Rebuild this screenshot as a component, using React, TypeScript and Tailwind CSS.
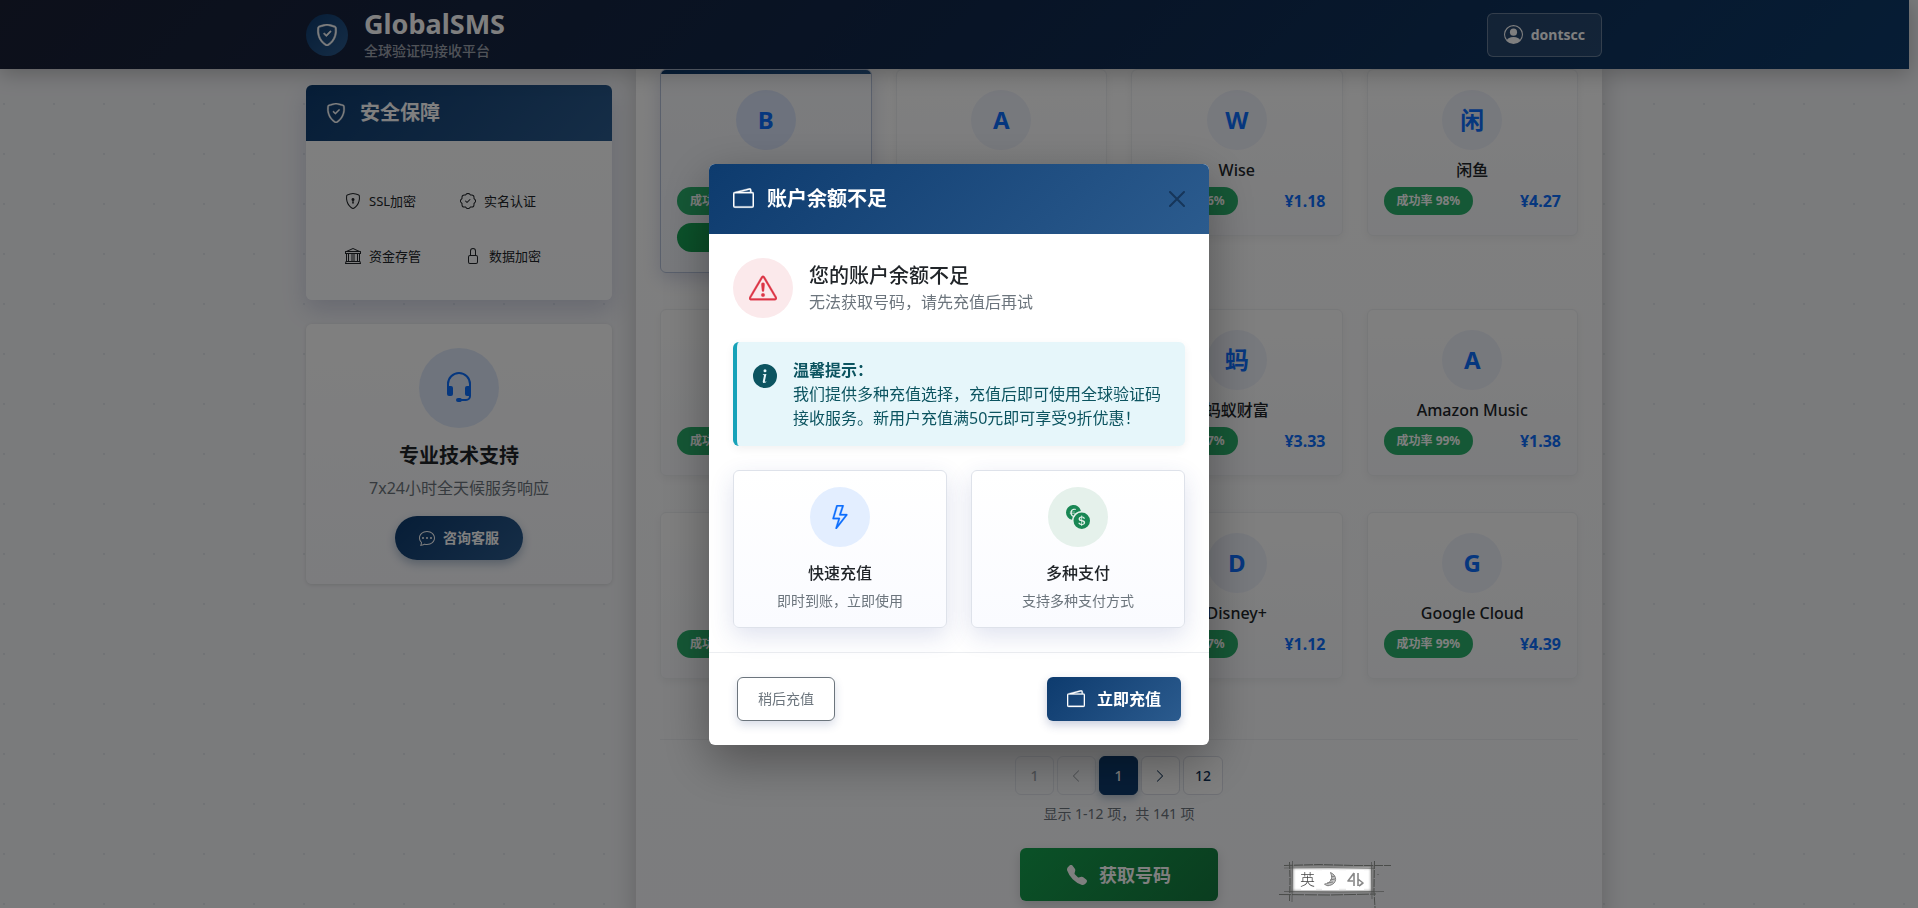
import type { ReactNode } from "react";
import {
  BsBank,
  BsChatDots,
  BsChevronLeft,
  BsChevronRight,
  BsCurrencyExchange,
  BsExclamationTriangle,
  BsHeadset,
  BsInfoCircleFill,
  BsLightning,
  BsLock,
  BsPatchCheck,
  BsPersonCircle,
  BsShieldCheck,
  BsShieldLock,
  BsTelephoneFill,
  BsWallet2,
} from "react-icons/bs";

interface Service {
  initial: string;
  name: string;
  rate: number;
  price: string;
  selected?: boolean;
}

const services: Service[] = [
  { initial: "B", name: "Bumble", rate: 98, price: "1.25", selected: true },
  { initial: "A", name: "Apple", rate: 97, price: "2.10" },
  { initial: "W", name: "Wise", rate: 96, price: "1.18" },
  { initial: "闲", name: "闲鱼", rate: 98, price: "4.27" },
  { initial: "T", name: "Telegram", rate: 98, price: "3.60" },
  { initial: "N", name: "Netflix", rate: 97, price: "1.45" },
  { initial: "蚂", name: "蚂蚁财富", rate: 97, price: "3.33" },
  { initial: "A", name: "Amazon Music", rate: 99, price: "1.38" },
  { initial: "L", name: "LINE", rate: 98, price: "2.80" },
  { initial: "S", name: "Steam", rate: 96, price: "1.62" },
  { initial: "D", name: "Disney+", rate: 97, price: "1.12" },
  { initial: "G", name: "Google Cloud", rate: 99, price: "4.39" },
];

const guarantees = [
  { icon: BsShieldLock, label: "SSL加密" },
  { icon: BsPatchCheck, label: "实名认证" },
  { icon: BsBank, label: "资金存管" },
  { icon: BsLock, label: "数据加密" },
];

function Header() {
  return (
    <header className="relative z-10 mr-[9px] pr-px bg-linear-135 from-[#1a2035] via-[#10284c] to-[#0c3a6a] shadow-[0_4px_20px_rgba(0,0,0,0.25)]">
      <div className="max-w-[1320px] mx-auto px-3 h-[69px] flex items-center justify-between">
        <a href="#" className="flex items-center gap-4">
          <span className="w-[42px] h-[42px] rounded-full bg-linear-135 from-[#0d3b6e] to-[#2b5b8e] flex items-center justify-center text-white">
            <BsShieldCheck size={22} strokeWidth={0.4} />
          </span>
          <span className="flex flex-col">
            <span className="text-[27px] leading-8 font-bold text-white">
              GlobalSMS
            </span>
            <span className="text-sm leading-[22px] font-medium text-white/60">
              全球验证码接收平台
            </span>
          </span>
        </a>

        <button className="h-11 px-4 flex items-center gap-2 rounded-md border border-white/30 bg-white/10 text-white text-sm font-bold">
          <BsPersonCircle size={19} />
          dontscc
        </button>
      </div>
    </header>
  );
}

function SecurityCard() {
  return (
    <section className="rounded-md overflow-hidden bg-linear-to-b from-white to-[#fbfcff] shadow-[0_10px_24px_rgba(40,50,120,0.18)]">
      <h2 className="h-14 px-5 flex items-center gap-[14px] bg-linear-135 from-[#0d3b6e] to-[#2b5b8e] text-white text-xl font-bold">
        <BsShieldCheck size={20} strokeWidth={0.3} />
        安全保障
      </h2>
      <ul className="flex flex-wrap gap-x-11 gap-y-[35px] pl-[39px] pr-8 pt-[50px] pb-[34px] text-[13px] leading-5 text-[#212529]">
        {guarantees.map(({ icon: Icon, label }) => (
          <li key={label} className="flex items-center gap-2">
            <Icon size={16} />
            {label}
          </li>
        ))}
      </ul>
    </section>
  );
}

function SupportCard() {
  return (
    <section className="rounded-md p-6 flex flex-col items-center bg-linear-to-b from-white to-[#f8f9fd] shadow-[0_1px_4px_rgba(0,0,0,0.12)]">
      <div className="w-20 h-20 rounded-full bg-[#dfe9fb] flex items-center justify-center text-[#0d6efd]">
        <BsHeadset size={32} />
      </div>
      <h2 className="mt-4 text-xl leading-6 font-bold text-[#212529]">
        专业技术支持
      </h2>
      <p className="mt-2 leading-6 text-[#6c757d]">7x24小时全天候服务响应</p>
      <button className="mt-4 h-11 px-6 flex items-center gap-2 rounded-full bg-linear-135 from-[#0d3b6e] to-[#2b5b8e] text-white text-sm font-bold shadow-[0_4px_10px_rgba(13,59,110,0.3)]">
        <BsChatDots size={16} />
        咨询客服
      </button>
    </section>
  );
}

function ServiceCard({ initial, name, rate, price, selected }: Service) {
  return (
    <div
      className={`relative overflow-hidden rounded-md border px-4 py-5 ${
        selected
          ? "border-[#b4c0d8] bg-linear-to-b from-[#f8f9fc] to-[#f0f3f9] shadow-[0_6px_18px_rgba(40,50,120,0.18)]"
          : "border-[#eef0f3] bg-linear-to-b from-white to-[#f8f9fc] shadow-[0_3px_8px_rgba(0,0,0,0.05)]"
      }`}
    >
      {selected && (
        <div className="absolute inset-x-0 top-0 h-1 bg-linear-to-r from-[#0d3b6e] to-[#2b5b8e]" />
      )}
      <div
        className={`w-[60px] h-[60px] mx-auto rounded-full flex items-center justify-center text-2xl font-bold text-[#0d6efd] ${
          selected ? "bg-[#dbe5fa]" : "bg-[#eff2fb]"
        }`}
      >
        {initial}
      </div>
      <p className="mt-2 mb-[5px] leading-6 text-center font-medium text-[#212529]">
        {name}
      </p>
      <div className="flex items-center justify-between">
        <span className="h-7 px-[13px] flex items-center rounded-full bg-[#2bb06c] text-xs font-bold text-white">
          成功率 {rate}%
        </span>
        <span className="font-bold text-[#0d6efd]">¥{price}</span>
      </div>
      {selected && (
        <span className="mt-2 h-[29px] flex items-center justify-center rounded-full bg-linear-135 from-[#17a657] to-[#15803d] text-xs font-bold text-white">
          已选择
        </span>
      )}
    </div>
  );
}

function PageButton({
  label,
  children,
  active,
  disabled,
}: {
  label: string;
  children: ReactNode;
  active?: boolean;
  disabled?: boolean;
}) {
  return (
    <button
      aria-label={label}
      disabled={disabled}
      className={`h-[39px] min-w-[39px] px-[11px] flex items-center justify-center rounded-md border text-sm font-medium ${
        active
          ? "border-[#0d3b6e] bg-[#0d3b6e] text-white shadow-[0_3px_8px_rgba(13,59,110,0.3)]"
          : disabled
          ? "border-[#e4e7ee] text-[#a0a6ac]"
          : "border-[#dcdfe8] bg-white text-[#0d2f55]"
      }`}
    >
      {children}
    </button>
  );
}

function ServicePanel() {
  return (
    <section className="flex-1 min-w-0 px-6 pb-6 bg-linear-to-b from-white to-[#f8f9fc] shadow-[0_0_24px_rgba(0,0,0,0.2)]">
      <div className="grid grid-cols-4 gap-x-6 gap-y-9 items-start">
        {services.map((service) => (
          <ServiceCard key={service.name} {...service} />
        ))}
      </div>

      <div className="mt-[60px] pt-4 border-t border-[#eceef2] flex flex-col items-center">
        <nav className="flex gap-[3px]">
          <PageButton label="首页" disabled>
            1
          </PageButton>
          <PageButton label="上一页" disabled>
            <BsChevronLeft size={14} />
          </PageButton>
          <PageButton label="第1页" active>
            1
          </PageButton>
          <PageButton label="下一页">
            <BsChevronRight size={14} />
          </PageButton>
          <PageButton label="末页">12</PageButton>
        </nav>
        <p className="mt-2 text-sm leading-[21px] text-[#6c757d]">
          显示 1-12 项，共 141 项
        </p>
        <button className="mt-6 h-[53px] px-[47px] flex items-center gap-3 rounded-md bg-linear-135 from-[#15a34f] to-[#157a3f] text-white text-lg font-semibold shadow-[0_4px_12px_rgba(0,0,0,0.15)]">
          <BsTelephoneFill size={20} />
          获取号码
        </button>
      </div>
    </section>
  );
}

function Feature({
  icon,
  tint,
  title,
  text,
}: {
  icon: ReactNode;
  tint: string;
  title: string;
  text: string;
}) {
  return (
    <div className="p-4 flex flex-col items-center rounded-md border border-[#dee2ea] bg-linear-to-b from-white to-[#fafbff] shadow-[0_8px_24px_rgba(40,60,150,0.15)]">
      <div
        className={`w-[60px] h-[60px] rounded-full flex items-center justify-center ${tint}`}
      >
        {icon}
      </div>
      <h4 className="mt-4 leading-5 font-medium text-[#212529]">{title}</h4>
      <p className="mt-2 text-sm leading-5 text-[#6c757d]">{text}</p>
    </div>
  );
}

function BalanceModal() {
  return (
    <div className="fixed inset-0 z-50 bg-black/50 flex items-center justify-center">
      <div
        role="dialog"
        aria-labelledby="balance-title"
        className="w-[500px] rounded-md overflow-hidden bg-white shadow-[0_16px_48px_rgba(0,0,0,0.35)]"
      >
        <div className="h-[70px] px-6 flex items-center justify-between bg-linear-135 from-[#0d3b6e] to-[#2b5b8e]">
          <h2
            id="balance-title"
            className="flex items-center gap-[13px] text-xl font-semibold text-white"
          >
            <BsWallet2 size={21} strokeWidth={0.3} />
            账户余额不足
          </h2>
          <button aria-label="关闭" className="text-[#16365a]">
            <svg width="16" height="16" viewBox="0 0 16 16">
              <path
                d="M1 1l14 14M15 1L1 15"
                stroke="currentColor"
                strokeWidth="2"
                strokeLinecap="round"
              />
            </svg>
          </button>
        </div>

        <div className="p-6">
          <div className="flex items-center gap-4">
            <div className="w-[60px] h-[60px] rounded-full bg-[#fbe9eb] flex items-center justify-center text-[#dc3545]">
              <BsExclamationTriangle size={28} strokeWidth={0.2} />
            </div>
            <div>
              <h3 className="text-xl leading-7 font-medium text-[#212529]">
                您的账户余额不足
              </h3>
              <p className="leading-6 text-[#6c757d]">
                无法获取号码，请先充值后再试
              </p>
            </div>
          </div>

          <div className="mt-6 p-4 flex items-start gap-4 rounded-md border-l-4 border-[#17a2b8] bg-[#e6f6fa] text-[#0c5460] shadow-[0_3px_10px_rgba(0,0,0,0.06)]">
            <BsInfoCircleFill size={24} className="mt-[6px] shrink-0" />
            <p className="leading-6">
              <strong className="block">温馨提示：</strong>
              我们提供多种充值选择，充值后即可使用全球验证码接收服务。新用户充值满50元即可享受9折优惠！
            </p>
          </div>

          <div className="mt-6 grid grid-cols-2 gap-6">
            <Feature
              icon={<BsLightning size={24} strokeWidth={0.2} />}
              tint="bg-[#e3eeff] text-[#0d6efd]"
              title="快速充值"
              text="即时到账，立即使用"
            />
            <Feature
              icon={<BsCurrencyExchange size={24} />}
              tint="bg-[#e5f1eb] text-[#198754]"
              title="多种支付"
              text="支持多种支付方式"
            />
          </div>
        </div>

        <div className="border-t border-[#eceef1] px-7 py-6 flex items-center justify-between">
          <button className="h-11 px-5 rounded-md border border-[#6c757d] bg-white text-sm text-[#6c757d] shadow-[0_4px_10px_rgba(40,60,120,0.18)]">
            稍后充值
          </button>
          <button className="h-11 px-5 flex items-center gap-3 rounded-md bg-linear-135 from-[#0d3b6e] to-[#2b5b8e] text-white font-bold shadow-[0_4px_10px_rgba(40,60,120,0.25)]">
            <BsWallet2 size={18} strokeWidth={0.3} />
            立即充值
          </button>
        </div>
      </div>
    </div>
  );
}

// floating input method bar, sits above the modal backdrop
function InputMethodBar() {
  return (
    <div className="fixed z-60 left-[1279px] top-[861px]">
      <svg width="114" height="47" viewBox="0 0 114 47" fill="none">
        <defs>
          <filter id="glow" x="-10%" y="-20%" width="120%" height="140%">
            <feGaussianBlur stdDeviation="1.8" />
          </filter>
        </defs>
        <rect x="11" y="4" width="84" height="28" fill="#707070" />
        <rect x="14" y="7" width="78" height="23" fill="#fff" filter="url(#glow)" />
        <rect x="22" y="9" width="15" height="20" fill="#fff" />
        <rect x="43" y="9" width="17" height="20" fill="#fff" />
        <rect x="67" y="9" width="18" height="20" fill="#fff" />
        <g stroke="#4a4c4a" strokeWidth="1">
          <path d="M5 4.500 L40 3.500 L76 4.500 L112 4.500" strokeDasharray="9 1" />
          <path d="M5 7 L50 6.500 L96 7.500" opacity="0.5" />
          <path d="M0 33.500 L50 34 L97 33" strokeDasharray="12 1" />
          <path d="M5 30.500 L60 31 L105 30.500" opacity="0.7" />
          <path d="M10.500 1 L11 20 L10.500 40" strokeDasharray="7 1" />
          <path d="M13.500 0 L13 41" opacity="0.7" />
          <path d="M92.500 1 L93 38" opacity="0.7" />
          <path d="M95.500 0 L95 30 L96 47" strokeDasharray="8 1" />
          <path d="M99 13v1" />
        </g>
        <text
          x="21"
          y="24"
          fontSize="15"
          fontWeight="300"
          fill="#444"
          fontFamily="'Noto Sans CJK SC', sans-serif"
        >
          英
        </text>
        <path
          d="M51.500 11.500c7 3 7 11 -1 13-2 0.500-4 0-5-1.500 3 0 6-2 7-5 0.500-2 0-4-1-6.500z"
          stroke="#808080"
          fill="#c4c4c4"
        />
        <path d="M52 16l4-1M51 19l5-1M48 22l6-1" stroke="#808080" />
        <path
          d="M75 12l-6 8h5M75 12v13M79 12v13M79 18l5 4-4 3"
          stroke="#888"
          strokeWidth="1.600"
          strokeLinejoin="round"
        />
      </svg>
    </div>
  );
}

export default function App() {
  return (
    <div className="h-screen overflow-hidden bg-[#f5f6f9] bg-[radial-gradient(circle_at_4px_4px,rgba(15,52,96,0.08)_1px,transparent_1px)] bg-size-[50px_50px] font-['Noto_Sans','Noto_Sans_CJK_SC',sans-serif] text-base">
      <Header />
      <div className="mr-[9px] pr-px">
        <main className="max-w-[1320px] mx-auto px-3 flex gap-6">
          <aside className="w-[306px] shrink-0 pt-4 flex flex-col gap-6">
            <SecurityCard />
            <SupportCard />
          </aside>
          <ServicePanel />
        </main>
      </div>
      <BalanceModal />
      <InputMethodBar />
    </div>
  );
}
